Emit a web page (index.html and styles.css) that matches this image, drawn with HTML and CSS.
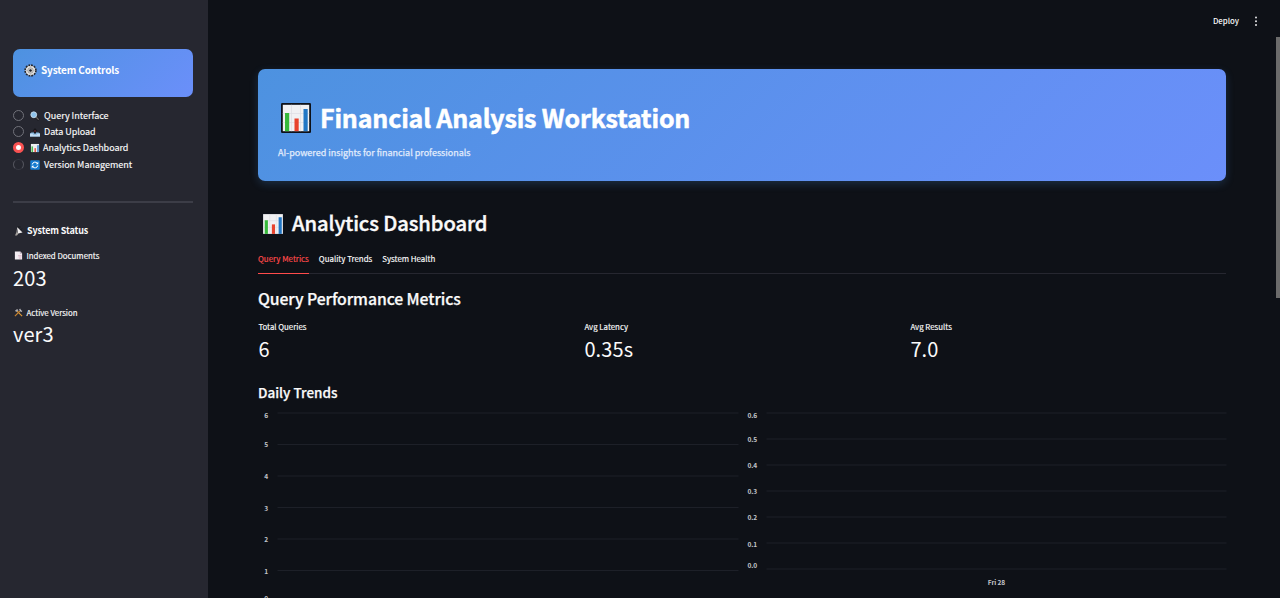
FILE: index.html
```html
<!DOCTYPE html>
<html lang="en">
<head>
<meta charset="utf-8">
<title>Financial Analysis Workstation</title>
<link rel="stylesheet" href="styles.css">
</head>
<body>
<svg width="0" height="0" class="defs" aria-hidden="true">
  <symbol id="chart" viewBox="0 0 32 32">
    <rect x="1" y="1" width="30" height="30" rx="1.2" fill="#0d1119"/>
    <rect x="2.8" y="2.8" width="26.4" height="26.4" fill="#f1f1f3"/>
    <path d="M2.8 11.500h26.400M2.800 20.500h26.400M11.500 2.800v26.400M20.500 2.800v26.400" stroke="#dcdde2" stroke-width=".7"/>
    <rect x="5" y="11" width="4.200" height="18.200" fill="#37b93b"/>
    <rect x="14.500" y="16.500" width="4.200" height="12.700" fill="#e8432d"/>
    <rect x="23.500" y="7" width="4.200" height="22.200" fill="#2277c5"/>
  </symbol>
</svg>
<div class="app">
  <aside class="sidebar">
    <div class="controls">
      <svg viewBox="0 0 24 24"><circle cx="12" cy="12" r="10" fill="#d8d8d8" stroke="#24272e" stroke-width="3" stroke-dasharray="3.4 1.83"/><circle cx="12" cy="12" r="7.6" fill="#e6e3df"/><circle cx="12" cy="12" r="5" fill="none" stroke="#8a8b8d" stroke-width="1.4"/><path d="M12 4v16M4 12h16" stroke="#b5b5b5" stroke-width="1.3"/><circle cx="12" cy="12" r="2.4" fill="#1d1f25"/></svg>
      <b>System Controls</b>
    </div>
    <nav class="radios">
      <div class="radio"><i></i><svg viewBox="0 0 20 20"><path d="M11 11l7 7" stroke="#17181c" stroke-width="5"/><path d="M11.5 11.5l6 6" stroke="#6b6360" stroke-width="2.4"/><circle cx="7.5" cy="7.5" r="5.8" fill="#8ec3ec" stroke="#c9dbe8" stroke-width="1.8"/></svg><span>Query Interface</span></div>
      <div class="radio"><i></i><svg viewBox="0 0 20 20"><path d="M0 13l3-2h14l3 2v6H0z" fill="#8cb9e2"/><path d="M0 13.500h5l1.500 2h7l1.500-2h5V19H0z" fill="#c4dcf2"/><path d="M10 2l5 6h-3v5H8V8H5z" fill="#17171b"/><path d="M9 6h2v4H9z" fill="#7d1f2b"/></svg><span class="tight">Data Upload</span></div>
      <div class="radio on"><i></i><svg viewBox="0 0 32 32"><use href="#chart"/></svg><span class="dash">Analytics Dashboard</span></div>
      <div class="radio dim"><i></i><svg viewBox="0 0 20 20"><rect x=".5" y=".5" width="19" height="19" rx="1.5" fill="#147bd1"/><path d="M4.5 9a5.6 5.6 0 0 1 10-2.5M15.500 11a5.600 5.600 0 0 1-10 2.500" fill="none" stroke="#fff" stroke-width="2"/><path d="M16.500 3.500v5h-5zM3.500 16.500v-5h5z" fill="#fff"/></svg><span>Version Management</span></div>
    </nav>
    <hr>
    <div class="status">
      <svg viewBox="0 0 20 20"><path d="M6 2l11 11-9 2z" fill="#f0eeee"/><path d="M6 2c-1 5 0 11 3 13l-3 4H2l3-7" fill="#a5a19e"/><path d="M7 2h6M13 8l3-3" stroke="#17181b" stroke-width="2"/></svg>
      <b>System Status</b>
    </div>
    <div class="metric side">
      <div class="label"><svg viewBox="0 0 20 20"><path d="M2 1h12l4 4v14H2z" fill="#f3edf2"/><path d="M13 1v5h5z" fill="#b9a9b8"/><path d="M9 10h8M10 13h7M11 16h5" stroke="#d3a2ba" stroke-width="1.3"/></svg><span>Indexed Documents</span></div>
      <div class="value">203</div>
    </div>
    <div class="metric side second">
      <div class="label"><svg viewBox="0 0 20 20"><path d="M7 7l11 11" stroke="#e09a36" stroke-width="2.600"/><path d="M2 18L13 7" stroke="#c98531" stroke-width="2.600"/><path d="M2 6l5-4 3 3-5 4z" fill="#a9aab0"/><path d="M13 2l1 4 4 1" fill="none" stroke="#d9dade" stroke-width="2.400"/></svg><span>Active Version</span></div>
      <div class="value">ver3</div>
    </div>
  </aside>
  <main class="main">
    <header class="top">
      <span>Deploy</span>
      <svg viewBox="0 0 4 12"><circle cx="2" cy="2.500" r="1"/><circle cx="2" cy="6.200" r="1"/><circle cx="2" cy="9.900" r="1"/></svg>
    </header>
    <section class="banner">
      <h1><svg viewBox="0 0 32 32"><use href="#chart"/></svg><span>Financial Analysis Workstation</span></h1>
      <p><span>AI-powered insights for financial professionals</span></p>
    </section>
    <h2><svg viewBox="0 0 32 32"><use href="#chart"/></svg><span>Analytics Dashboard</span></h2>
    <div class="tabs">
      <span class="tab active">Query Metrics</span>
      <span class="tab">Quality Trends</span>
      <span class="tab">System Health</span>
    </div>
    <h3>Query Performance Metrics</h3>
    <div class="metrics">
      <div class="metric"><div class="label"><span>Total Queries</span></div><div class="value">6</div></div>
      <div class="metric"><div class="label"><span>Avg Latency</span></div><div class="value">0.35s</div></div>
      <div class="metric"><div class="label"><span>Avg Results</span></div><div class="value">7.0</div></div>
    </div>
    <h4>Daily Trends</h4>
    <div class="charts">
      <svg width="480" height="196" viewBox="0 0 480 196">
        <path class="grid" d="M19.500 11h461M19.500 42.500h461M19.500 74h461M19.500 105.500h461M19.500 137h461M19.500 168.500h461"/>
        <g text-anchor="end"><text x="10" y="16">6</text><text x="10" y="45">5</text><text x="10" y="76.500">4</text><text x="10" y="108.500">3</text><text x="10" y="139.500">2</text><text x="10" y="171.500">1</text><text x="10" y="198.500">0</text></g>
      </svg>
      <svg width="480" height="196" viewBox="0 0 480 196">
        <path class="grid" d="M20.500 11h460M20.500 37h460M20.500 63h460M20.500 89h460M20.500 115h460M20.500 141h460M20.500 167h460"/>
        <g text-anchor="end"><text x="11" y="16">0.6</text><text x="11" y="39.500">0.5</text><text x="11" y="66">0.4</text><text x="11" y="91.500">0.3</text><text x="11" y="118">0.2</text><text x="11" y="144.500">0.1</text><text x="11" y="166">0.0</text></g>
        <text x="250.500" y="183" text-anchor="middle">Fri 28</text>
      </svg>
    </div>
    <div class="scrollbar"></div>
  </main>
</div>
</body>
</html>
```
FILE: styles.css
```css
* { box-sizing: border-box; }
body {
  margin: 0;
  height: 598px;
  overflow: hidden;
  background: #0e1117;
  color: #fafafa;
  font-family: "Noto Sans CJK SC", "Noto Sans", sans-serif;
}
.defs { position: absolute; }
.app { display: flex; height: 598px; }
svg { flex: none; display: block; }
span, b { white-space: nowrap; }
h1, h2, h3, h4, p { margin: 0; }

.sidebar { width: 208px; flex: none; background: #262730; padding: 49px 15px 0 13px; }
.controls {
  display: flex; align-items: center; height: 48px; padding: 0 0 6px 11px;
  border-radius: 7px; background: linear-gradient(135deg, #4d92e0, #6b8ffa);
}
.controls svg { width: 13px; height: 13px; margin-right: 4px; }
.controls b { font-size: 10px; letter-spacing: -.16px; line-height: 14px; color: #fff; }
.radios { padding-top: 10.500px; }
.radio { display: flex; align-items: center; height: 16.200px; font-size: 9px; line-height: 14px; -webkit-text-stroke: .15px; }
.radio i { width: 11px; height: 11px; border: 1px solid #71727a; border-radius: 50%; margin-right: 6px; }
.radio.on i { border: 3.500px solid #f95252; background: #fff; }
.radio.dim { position: relative; top: .5px; }
.radio.dim i { border-color: #35363f #55565f; }
.radio svg { width: 10px; height: 10px; margin-right: 4px; }
.radio .dash { margin-left: -1px; letter-spacing: -.02px; }
.radio .tight { letter-spacing: -.03px; }
hr { border: 0; height: 2px; margin: 28.700px 0 0; background: #3c3d47; }
.status { display: flex; align-items: center; height: 14px; margin-top: 21px; }
.status svg { width: 10px; height: 10px; margin: 0 3px 0 1px; }
.status b { font-size: 9px; letter-spacing: -.12px; line-height: 14px; }

.metric .label { display: flex; align-items: center; height: 12px; font-size: 7.850px; line-height: 12px; -webkit-text-stroke: .15px; }
.metric .value { font-size: 20px; line-height: 26px; height: 26px; margin-top: 3px; letter-spacing: .1px; }
.side { margin-top: 12px; }
.side.second { margin-top: 16px; }
.side.second .value { margin-top: 2px; }
.side .label svg { width: 9px; height: 9px; margin: 0 3.500px 0 1px; }

.main { flex: 1; min-width: 0; padding: 0 54px 0 50px; overflow: hidden; }
.top { display: flex; justify-content: flex-end; align-items: center; height: 41px; margin: 0 -32px 28px 0; font-size: 7.800px; font-weight: 500; }
.top svg { width: 4px; height: 12px; margin: 0 0 0 15px; fill: #e4e4e6; }
.banner {
  height: 112px; padding: 30px 0 0 20px; border-radius: 7px;
  background: linear-gradient(135deg, #4d92e0, #6b8ffa);
  box-shadow: 0 3px 8px rgba(74, 144, 226, .22);
}
h1 { display: flex; align-items: center; height: 38px; font-size: 25px; letter-spacing: -.18px; line-height: 38px; color: #fff; -webkit-text-stroke: .5px; }
h1 svg { width: 32px; height: 32px; margin: 0 8px 0 2px; }
h1 span, h2 span { position: relative; top: -1px; }
.banner p { height: 14px; margin-top: 8.500px; font-size: 9px; letter-spacing: -.01px; line-height: 14px; color: #e2ecfc; -webkit-text-stroke: .25px; }
h2 { display: flex; align-items: center; height: 30px; margin-top: 28px; font-size: 20.200px; letter-spacing: -.1px; line-height: 30px; font-weight: 500; -webkit-text-stroke: .4px; }
h2 svg { width: 24px; height: 24px; margin: 0 7px 0 3px; }
.tabs { display: flex; gap: 10px; height: 22px; margin-top: 13px; box-shadow: inset 0 -1px #262730; font-size: 7.900px; -webkit-text-stroke: .15px; }
.tab { height: 22px; line-height: 14.500px; }
.tab.active { color: #ff4b4b; border-bottom: 1px solid #ff4b4b; }
h3 { height: 24px; margin-top: 13px; font-size: 15.800px; letter-spacing: -.1px; line-height: 24px; font-weight: 500; -webkit-text-stroke: .25px; }
.metrics { display: flex; margin: 10px 0 0 .4px; }
.metrics .metric { width: 326px; flex: none; }
h4 { height: 20px; margin-top: 20px; font-size: 13.500px; line-height: 20px; font-weight: 500; -webkit-text-stroke: .25px; }
.charts { display: flex; gap: 8px; height: 196px; }
.charts svg { overflow: visible; }
.charts text { font-size: 6.600px; font-weight: 700; letter-spacing: -.1px; fill: #c3c5ca; }
.grid { stroke: #1d2028; stroke-width: 1; fill: none; }
.scrollbar { position: absolute; right: 0; top: 37px; width: 4px; height: 261px; background: #6b6b6b; }
```
